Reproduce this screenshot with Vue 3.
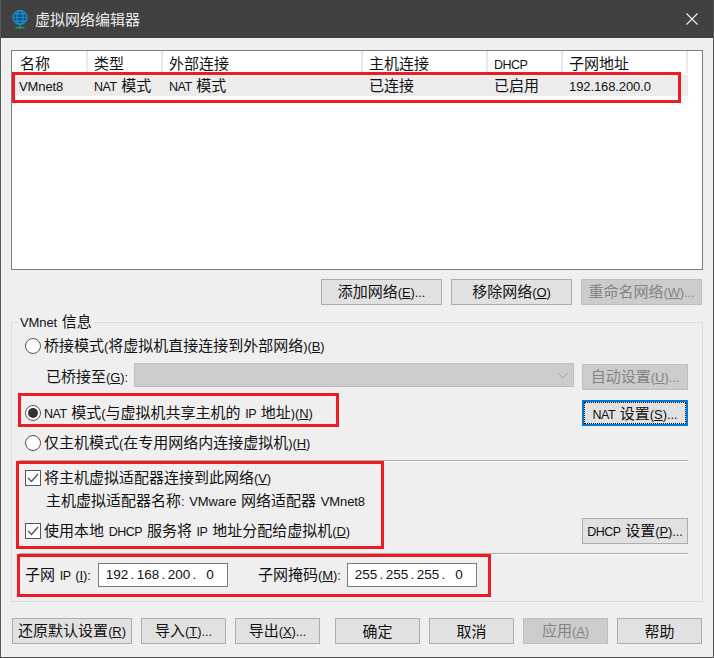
<script setup>
import { h } from 'vue'

// Renders mixed text: CJK runs at the base size, Latin runs smaller,
// "_X" = mnemonic underline, acronyms (NAT, DHCP, IP) set tighter.
const latin = (run) =>
  run.split(/_(.)/).map((p, i) => {
    if (i % 2) return h('u', p)
    return p.split(/\b(NAT|DHCP|IP)\b/).map((w, j) => (j % 2 ? h('span', { class: 'caps' }, w) : w))
  })
const Tx = (props) =>
  h('span', { class: 'tx' }, props.t.split(/([\x20-\x7e]+)/).filter(Boolean).map((run) =>
    /^[\x20-\x7e]/.test(run) ? h('span', { class: 'lat' }, latin(run)) : run
  ))
Tx.props = ['t']

const columns = [
  { w: 76, head: '名称', cell: 'VMnet8' },
  { w: 75, head: '类型', cell: 'NAT 模式' },
  { w: 200, head: '外部连接', cell: 'NAT 模式' },
  { w: 125, head: '主机连接', cell: '已连接' },
  { w: 75, head: 'DHCP', cell: '已启用' },
  { w: 125, head: '子网地址', cell: '192.168.200.0' }
]
const footer = [
  { t: '还原默认设置(_R)', cls: 'wide' },
  { t: '导入(_T)...' },
  { t: '导出(_X)...', cls: 'gap-after' },
  { t: '确定' },
  { t: '取消' },
  { t: '应用(_A)', disabled: true },
  { t: '帮助' }
]
const ip = ['192', '168', '200', '0']
const mask = ['255', '255', '255', '0']
</script>

<template>
  <div class="win">
    <header class="title">
      <svg class="logo" width="16" height="19" viewBox="0 0 16 19">
        <circle cx="8" cy="7.5" r="6.9" fill="#0f4d73" stroke="#1b90d6" stroke-width="1.3" />
        <path d="M1 7.5h14M2.5 3.8h11M2.5 11.2h11" stroke="#1b90d6" stroke-width="1.2" fill="none" />
        <ellipse cx="8" cy="7.5" rx="3.2" ry="6.9" stroke="#1b90d6" stroke-width="1.2" fill="none" />
        <path d="M8 14.5v3M3.5 17.8h9" stroke="#1f9d6b" stroke-width="1.4" fill="none" />
      </svg>
      <span class="title-text">虚拟网络编辑器</span>
      <svg class="close" width="12" height="12" viewBox="0 0 12 12">
        <path d="M.5.5l11 11M11.5.5l-11 11" stroke="#f0f0f0" stroke-width="1.1" fill="none" />
      </svg>
    </header>

    <main class="body">
      <section class="list">
        <div class="list-head">
          <div v-for="c in columns" :key="c.head" class="th" :style="{ width: c.w + 'px' }"><Tx :t="c.head" /></div>
        </div>
        <div class="list-row">
          <div v-for="c in columns" :key="c.head" class="td" :style="{ width: c.w + 'px' }"><Tx :t="c.cell" /></div>
        </div>
      </section>

      <div class="net-actions">
        <button class="btn net"><Tx t="添加网络(_E)..." /></button>
        <button class="btn net"><Tx t="移除网络(_O)" /></button>
        <button class="btn net off"><Tx t="重命名网络(_W)..." /></button>
      </div>

      <section class="group">
        <div class="legend"><Tx t="VMnet 信息" /></div>

        <div class="row r-bridge">
          <label class="opt"><i class="radio"></i><Tx t="桥接模式(将虚拟机直接连接到外部网络)(_B)" /></label>
        </div>

        <div class="row r-bridged">
          <span class="sub sub-label"><Tx t="已桥接至(_G):" /></span>
          <div class="select">
            <svg width="12" height="7" viewBox="0 0 12 7"><path d="M1 1l5 5 5-5" stroke="#a8a8a8" fill="none" /></svg>
          </div>
          <button class="btn side off auto"><Tx t="自动设置(_U)..." /></button>
        </div>

        <div class="row r-nat">
          <label class="opt"><i class="radio on"></i><Tx t="NAT 模式(与虚拟机共享主机的 IP 地址)(_N)" /></label>
          <button class="btn side focus"><span class="dots"><Tx t="NAT 设置(_S)..." /></span></button>
        </div>

        <div class="row r-host">
          <label class="opt"><i class="radio"></i><Tx t="仅主机模式(在专用网络内连接虚拟机)(_H)" /></label>
        </div>

        <div class="sep s1"></div>

        <div class="row r-check1">
          <label class="opt">
            <i class="check"><svg width="14" height="14" viewBox="0 0 14 14"><path d="M2 7l3.5 3.5L12 3" stroke="#555" stroke-width="1.4" fill="none" /></svg></i>
            <Tx t="将主机虚拟适配器连接到此网络(_V)" />
          </label>
        </div>
        <div class="row r-adapter">
          <span class="sub"><Tx t="主机虚拟适配器名称: VMware 网络适配器 VMnet8" /></span>
        </div>
        <div class="row r-check2">
          <label class="opt">
            <i class="check"><svg width="14" height="14" viewBox="0 0 14 14"><path d="M2 7l3.5 3.5L12 3" stroke="#555" stroke-width="1.4" fill="none" /></svg></i>
            <Tx t="使用本地 DHCP 服务将 IP 地址分配给虚拟机(_D)" />
          </label>
          <button class="btn side"><Tx t="DHCP 设置(_P)..." /></button>
        </div>

        <div class="sep s2"></div>

        <div class="row r-subnet">
          <span class="lab-ip"><Tx t="子网 IP (_I):" /></span>
          <div class="ipbox">
            <template v-for="(o, i) in ip" :key="i">
              <span class="octet">{{ o }}</span><span v-if="i < 3" class="dot">.</span>
            </template>
          </div>
          <span class="lab-mask"><Tx t="子网掩码(_M):" /></span>
          <div class="ipbox">
            <template v-for="(o, i) in mask" :key="i">
              <span class="octet">{{ o }}</span><span v-if="i < 3" class="dot">.</span>
            </template>
          </div>
        </div>
      </section>

      <footer class="foot">
        <button
          v-for="b in footer"
          :key="b.t"
          class="btn ft"
          :class="[b.cls, { off: b.disabled }]"
        ><Tx :t="b.t" /></button>
      </footer>
    </main>

    <div class="mark m1"></div>
    <div class="mark m2"></div>
    <div class="mark m3"></div>
    <div class="mark m4"></div>
  </div>
</template>

<style>
body { margin: 0; }
.tx { white-space: pre; }
.lat { font-family: "Liberation Sans", sans-serif; font-size: 13px; letter-spacing: -0.1px; word-spacing: 1.2px; }
.caps { font-size: 12.5px; letter-spacing: -0.5px; }
</style>

<style scoped>
.win {
  position: relative;
  width: 714px;
  height: 658px;
  box-sizing: border-box;
  background: #efefef;
  border: 1px solid #555;
  border-top: 0;
  overflow: hidden;
  font-family: "Noto Sans CJK SC", sans-serif;
  font-size: 15px;
  line-height: 20px;
  color: #111;
}
.title {
  height: 38px;
  margin: 0 -1px;
  background: #414141;
  color: #eee;
  display: flex;
  align-items: center;
  padding-left: 12px;
}
.logo { flex: none; }
.title-text { margin-left: 7px; }
.close { margin-left: auto; margin-right: 16px; }

.body { padding: 12px 10px 0; }

.list {
  height: 220px;
  box-sizing: border-box;
  background: #fff;
  border: 1px solid #7f7f7f;
}
.list-head, .list-row { display: flex; }
.list-head { height: 22px; }
.th {
  box-sizing: border-box;
  padding-left: 6px;
  border-right: 2px solid #e8e8e8;
  line-height: 23px;
}
.th:first-child { padding-left: 8px; }
.list-row {
  margin-top: 2px;
  height: 21px;
  width: 676px;
  background: #ececec;
}
.td {
  box-sizing: border-box;
  padding-left: 7px;
  line-height: 20px;
}
.td:not(:first-child) { padding-left: 6px; }

.net-actions {
  display: flex;
  justify-content: flex-end;
  gap: 9px;
  margin-top: 9px;
  margin-right: 1px;
}

.btn {
  height: 26px;
  padding: 0;
  box-sizing: border-box;
  background: #e1e1e1;
  border: 1px solid #adadad;
  border-radius: 0;
  font: inherit;
  line-height: 22px;
  color: #111;
  flex: none;
}
.btn.off { background: #cccccc; border-color: #bfbfbf; color: #838383; }
.net { width: 121px; }
.side { width: 106px; margin-left: auto; }
.ft { width: 85px; }
.ft.wide { width: 120px; }
.ft.gap-after { margin-right: 6px; }
.btn.focus {
  border: 2px solid #0078d7;
  padding: 0;
  display: flex;
  align-items: stretch;
}
.dots {
  flex: 1;
  border: 1px dotted #111;
  line-height: 20px;
}

.group {
  position: relative;
  margin-top: 17px;
  height: 280px;
  box-sizing: border-box;
  border: 1px solid #dcdcdc;
  padding: 0 14px 0 13px;
}
.legend {
  position: absolute;
  left: 7px;
  top: -12px;
  padding: 0 2px 0 1px;
  background: #efefef;
}

.row { display: flex; align-items: center; }
.opt { display: flex; align-items: center; gap: 3px; }
.radio {
  width: 16px;
  height: 16px;
  box-sizing: border-box;
  border: 1px solid #555;
  border-radius: 50%;
  background: #fff;
  display: block;
  flex: none;
  position: relative;
}
.radio.on::after {
  content: "";
  position: absolute;
  inset: 2px;
  border-radius: 50%;
  background: #333;
}
.check {
  width: 16px;
  height: 16px;
  box-sizing: border-box;
  border: 1px solid #555;
  background: #fff;
  display: flex;
  align-items: center;
  justify-content: center;
  flex: none;
}
.sub { padding-left: 21px; }
.sub-label { width: 109px; box-sizing: border-box; flex: none; }

.r-bridge { height: 24px; margin-top: 11px; }
.r-bridged { height: 27px; margin-top: 5px; align-items: flex-start; }
.r-bridged .sub-label { line-height: 26px; }
.select {
  width: 440px;
  height: 24px;
  box-sizing: border-box;
  background: #cccccc;
  border: 1px solid #bfbfbf;
  display: flex;
  align-items: center;
  justify-content: flex-end;
  padding-right: 4px;
}
.auto { margin-top: 1px; }
.r-nat { height: 26px; margin-top: 10px; }
.r-host { height: 20px; margin-top: 7px; }
.sep { height: 1px; background: #a9a9a9; box-shadow: 0 1px 0 #fff; margin-left: -6px; }
.s1 { margin-top: 7px; }
.r-check1 { height: 20px; margin-top: 7px; }
.r-adapter { height: 20px; margin-top: 3px; }
.r-check2 { height: 26px; margin-top: 7px; }
.s2 { margin-top: 9px; }
.r-subnet { height: 24px; margin-top: 9px; }
.lab-ip { width: 73px; flex: none; }
.lab-mask { width: 89px; flex: none; margin-left: 30px; }
.ipbox {
  width: 130px;
  height: 24px;
  box-sizing: border-box;
  flex: none;
  background: #fff;
  border: 1px solid #7a7a7a;
  padding-left: 6px;
  display: flex;
  font-family: "Liberation Sans", sans-serif;
  font-size: 13.5px;
  line-height: 22px;
}
.octet { width: 24px; text-align: center; flex: none; }
.dot { width: 7px; text-align: center; flex: none; }

.foot {
  display: flex;
  gap: 9px;
  margin-top: 16px;
  margin-left: 1px;
}

.mark {
  position: absolute;
  box-sizing: border-box;
  border: 3px solid #ed1c24;
  pointer-events: none;
}
.m1 { left: 11px; top: 72px; width: 669px; height: 31px; }
.m2 { left: 17px; top: 393px; width: 321px; height: 34px; }
.m3 { left: 15px; top: 461px; width: 368px; height: 88px; }
.m4 { left: 16px; top: 554px; width: 474px; height: 43px; }
</style>
